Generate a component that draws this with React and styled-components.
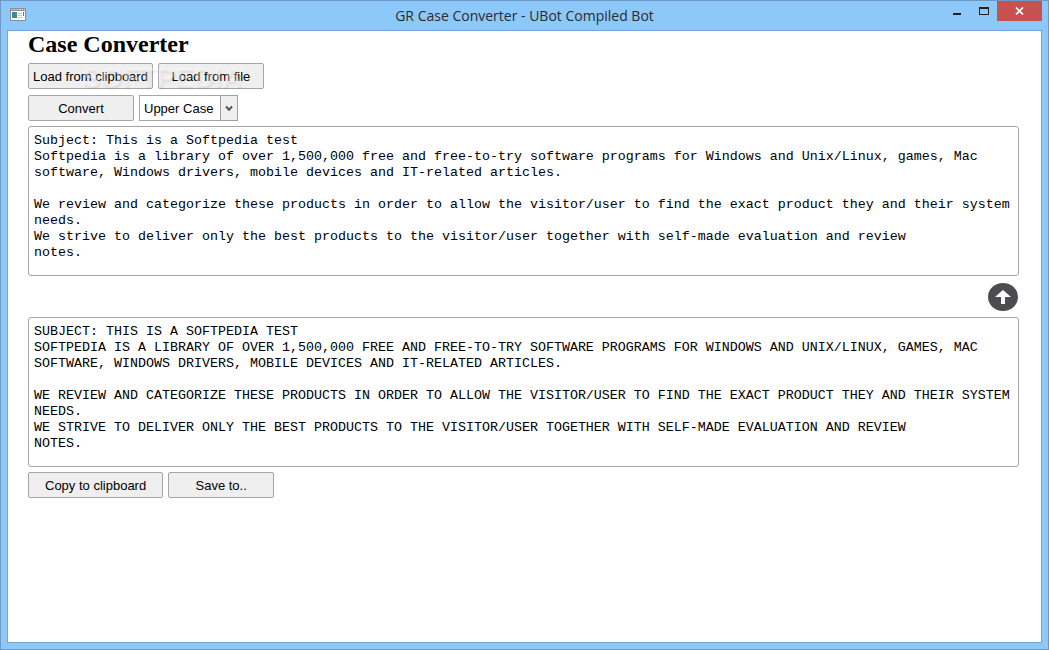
import { useState } from 'react'
import styled, { createGlobalStyle } from 'styled-components'

const GlobalStyle = createGlobalStyle`
  * {
    box-sizing: border-box;
  }

  body {
    margin: 0;
    font-family: "Liberation Sans", Arial, sans-serif;
    color: #000;
  }
`

const Window = styled.div`
  display: flex;
  flex-direction: column;
  min-height: 100vh;
  padding: 0 6px 6px;
  background: #8dc8fa;
  border: 1px solid #6d99c4;
`

const TitleBar = styled.header`
  display: grid;
  grid-template-columns: 1fr auto 1fr;
  height: 29px;
`

const AppIcon = styled.svg`
  margin: 7px 0 0 3px;
`

const WindowTitle = styled.div`
  font-family: "Open Sans", "Segoe UI", sans-serif;
  font-size: 14px;
  line-height: 29px;
  color: #2b2b2b;
`

const WindowControls = styled.div`
  display: flex;
  justify-content: flex-end;
`

const ControlButton = styled.button`
  display: flex;
  align-items: center;
  justify-content: center;
  width: ${({ $close }) => ($close ? '45px' : '27px')};
  height: 20px;
  padding: 0;
  border: none;
  background: ${({ $close }) => ($close ? '#c75050' : 'transparent')};
`

const Content = styled.main`
  position: relative;
  flex: 1;
  padding: 0 22px 20px 20px;
  background: #fff;
  border: 1px solid #70a5d8;
`

const Heading = styled.h1`
  margin: 0 0 5px;
  font-family: "Liberation Serif", "Times New Roman", serif;
  font-size: 24px;
  line-height: 27px;
`

const Row = styled.div`
  display: flex;
  gap: 5px;
  margin-bottom: ${({ $bottom }) => $bottom || '0'};
`

const Footer = styled(Row)`
  margin-top: 5px;
`

const Button = styled.button`
  min-width: 106px;
  height: 26px;
  padding: 0 ${({ $wide }) => ($wide ? '16px' : '4px')};
  font-family: inherit;
  font-size: 13px;
  color: #000;
  background: #efefef;
  border: 1px solid #a6a6a6;
  border-radius: 2px;
`

const SelectBox = styled.div`
  position: relative;
  width: 99px;
  height: 26px;
`

const Select = styled.select`
  width: 100%;
  height: 100%;
  padding: 0 20px 0 4px;
  appearance: none;
  font-family: inherit;
  font-size: 13px;
  color: #000;
  background: #fff;
  border: 1px solid #a6a6a6;
  border-radius: 0;
`

const SelectArrow = styled.span`
  position: absolute;
  top: 0;
  right: 0;
  display: flex;
  align-items: center;
  justify-content: center;
  width: 18px;
  height: 26px;
  background: #efefef;
  border: 1px solid #a0a0a0;
  pointer-events: none;
`

const TextArea = styled.textarea`
  display: block;
  width: 100%;
  height: 150px;
  padding: 6px 5px 5px;
  resize: none;
  overflow: hidden;
  font-family: "Liberation Mono", "Courier New", monospace;
  font-size: 10pt;
  line-height: 16px;
  color: #000;
  background: #fff;
  border: 1px solid #a6a6a6;
  border-radius: 3px;
  outline: none;
`

const SwapRow = styled.div`
  display: flex;
  align-items: center;
  justify-content: flex-end;
  height: 41px;
`

const SwapButton = styled.button`
  display: flex;
  padding: 0;
  border: none;
  background: none;
`

const Watermark = styled.div`
  position: absolute;
  top: 28px;
  left: 74px;
  font-size: 28px;
  font-weight: bold;
  line-height: 38px;
  color: rgba(255, 255, 255, 0.35);
  text-shadow: 1px 2px 2px rgba(0, 0, 0, 0.07);
  pointer-events: none;

  sup {
    font-size: 8px;
    line-height: 24px;
    vertical-align: top;
  }
`

const initialText = `Subject: This is a Softpedia test
Softpedia is a library of over 1,500,000 free and free-to-try software programs for Windows and Unix/Linux, games, Mac software, Windows drivers, mobile devices and IT-related articles.

We review and categorize these products in order to allow the visitor/user to find the exact product they and their system needs.
We strive to deliver only the best products to the visitor/user together with self-made evaluation and review
notes.`

const convert = (text, mode) => (mode === 'upper' ? text.toUpperCase() : text.toLowerCase())

export default function App() {
  const [source, setSource] = useState(initialText)
  const [mode, setMode] = useState('upper')
  const [result, setResult] = useState(convert(initialText, 'upper'))

  return (
    <>
      <GlobalStyle />
      <Window>
        <TitleBar>
          <AppIcon width="16" height="13" viewBox="0 0 16 13" shapeRendering="crispEdges">
            <rect width="16" height="13" fill="#8a8f94" />
            <rect x="1" y="3" width="14" height="9" fill="#fff" />
            <rect x="1" y="1" width="9" height="1" fill="#b9bec3" />
            <path d="M10 1h1v1h-1zM12 1h1v1h-1zM14 1h1v1h-1z" fill="#e8edf2" />
            <rect x="2" y="4" width="5" height="6" fill="#3d8c86" />
            <path d="M2 4h3v2H4v2H2z" fill="#3f79b5" />
            <path d="M8 5h4v1H8zM8 7h4v1H8zM8 9h4v1H8z" fill="#c4c8cc" />
            <rect x="13" y="4" width="1" height="4" fill="#4e7f90" />
          </AppIcon>
          <WindowTitle>GR Case Converter - UBot Compiled Bot</WindowTitle>
          <WindowControls>
            <ControlButton type="button" aria-label="Minimize">
              <svg width="12" height="12" shapeRendering="crispEdges">
                <rect x="2" y="8" width="8" height="2" fill="#202020" />
              </svg>
            </ControlButton>
            <ControlButton type="button" aria-label="Maximize">
              <svg width="10" height="10" shapeRendering="crispEdges">
                <path d="M0 1h10v8H0zM1 3v5h8V3z" fill="#202020" fillRule="evenodd" />
              </svg>
            </ControlButton>
            <ControlButton type="button" aria-label="Close" $close>
              <svg width="9" height="8" viewBox="0 0 9 8">
                <path d="M1 0.5l7 7M8 0.5l-7 7" stroke="#fff" strokeWidth="1.7" />
              </svg>
            </ControlButton>
          </WindowControls>
        </TitleBar>

        <Content>
          <Heading>Case Converter</Heading>
          <Row $bottom="6px">
            <Button type="button">Load from clipboard</Button>
            <Button type="button">Load from file</Button>
          </Row>
          <Row $bottom="5px">
            <Button type="button" onClick={() => setResult(convert(source, mode))}>Convert</Button>
            <SelectBox>
              <Select aria-label="Case" value={mode} onChange={(e) => setMode(e.target.value)}>
                <option value="upper">Upper Case</option>
                <option value="lower">Lower Case</option>
              </Select>
              <SelectArrow>
                <svg width="8" height="7" viewBox="0 0 8 7">
                  <path d="M1 1.5l3 3.2 3-3.2" fill="none" stroke="#555" strokeWidth="2" />
                </svg>
              </SelectArrow>
            </SelectBox>
          </Row>

          <TextArea
            aria-label="Source text"
            spellCheck={false}
            value={source}
            onChange={(e) => setSource(e.target.value)}
          />
          <SwapRow>
            <SwapButton type="button" aria-label="Move up" onClick={() => setSource(result)}>
              <svg width="32" height="28" viewBox="0 0 32 28">
                <ellipse cx="16" cy="14" rx="15" ry="14" fill="#4d4d4f" />
                <path d="M16 7l8 7h-6v7h-4v-7H8z" fill="#fff" />
              </svg>
            </SwapButton>
          </SwapRow>
          <TextArea
            aria-label="Converted text"
            spellCheck={false}
            value={result}
            onChange={(e) => setResult(e.target.value)}
          />
          <Footer>
            <Button type="button" $wide>Copy to clipboard</Button>
            <Button type="button">Save to..</Button>
          </Footer>
          <Watermark aria-hidden="true">SOFTPEDIA<sup>®</sup></Watermark>
        </Content>
      </Window>
    </>
  )
}
